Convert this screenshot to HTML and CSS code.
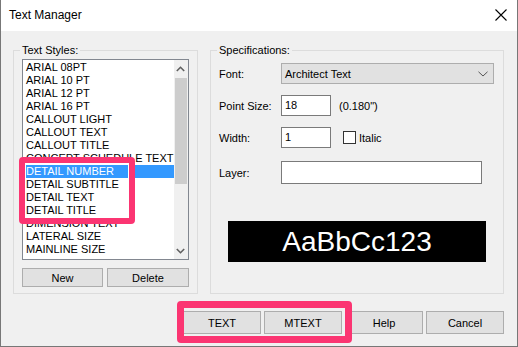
FILE: index.html
```html
<!DOCTYPE html>
<html lang="en">
<head>
    <meta charset="UTF-8">
    <title>Text Manager</title>
    <link rel="stylesheet" href="styles.css">
</head>
<body>
<div class="window">
    <div class="titlebar">
        <span class="title">Text Manager</span>
        <svg class="close" width="12" height="12" viewBox="0 0 12 12">
            <path d="M0.5 0.5L11.5 11.5M11.5 0.5L0.5 11.5" stroke="#000" stroke-width="1.1" fill="none"/>
        </svg>
    </div>
    <div class="body">
        <div class="groups">
            <fieldset class="group styles">
                <legend>Text Styles:</legend>
                <div class="listbox">
                    <ul class="items">
                        <li>ARIAL 08PT</li>
                        <li>ARIAL 10 PT</li>
                        <li>ARIAL 12 PT</li>
                        <li>ARIAL 16 PT</li>
                        <li>CALLOUT LIGHT</li>
                        <li>CALLOUT TEXT</li>
                        <li>CALLOUT TITLE</li>
                        <li>CONCEPT SCHEDULE TEXT</li>
                        <li class="selected">DETAIL NUMBER</li>
                        <li>DETAIL SUBTITLE</li>
                        <li>DETAIL TEXT</li>
                        <li>DETAIL TITLE</li>
                        <li>DIMENSION TEXT</li>
                        <li>LATERAL SIZE</li>
                        <li>MAINLINE SIZE</li>
                    </ul>
                    <div class="scrollbar">
                        <div class="sb-btn">
                            <svg width="9" height="6" viewBox="0 0 9 6"><path d="M0.8 5L4.5 1.3L8.2 5" stroke="#606060" stroke-width="1.6" fill="none"/></svg>
                        </div>
                        <div class="sb-track"><div class="sb-thumb"></div></div>
                        <div class="sb-btn">
                            <svg width="9" height="6" viewBox="0 0 9 6"><path d="M0.8 1L4.5 4.7L8.2 1" stroke="#606060" stroke-width="1.6" fill="none"/></svg>
                        </div>
                    </div>
                </div>
                <div class="list-buttons">
                    <button class="btn">New</button>
                    <button class="btn">Delete</button>
                </div>
            </fieldset>
            <fieldset class="group specs">
                <legend>Specifications:</legend>
                <div class="row row-font">
                    <span class="label">Font:</span>
                    <div class="combo">
                        <span>Architect Text</span>
                        <svg width="10" height="6" viewBox="0 0 10 6"><path d="M0.5 0.8L5 5L9.5 0.8" stroke="#555" stroke-width="1" fill="none"/></svg>
                    </div>
                </div>
                <div class="row row-size">
                    <span class="label">Point Size:</span>
                    <div class="input small">18</div>
                    <span class="note">(0.180")</span>
                </div>
                <div class="row row-width">
                    <span class="label">Width:</span>
                    <div class="input small">1</div>
                    <span class="check"></span>
                    <span class="check-label">Italic</span>
                </div>
                <div class="row row-layer">
                    <span class="label">Layer:</span>
                    <div class="input wide"></div>
                </div>
                <div class="preview">AaBbCc123</div>
            </fieldset>
        </div>
        <div class="actions">
            <button class="btn action">TEXT</button>
            <button class="btn action">MTEXT</button>
            <button class="btn action">Help</button>
            <button class="btn action">Cancel</button>
        </div>
    </div>
    <div class="mark mark-list"></div>
    <div class="mark mark-actions"></div>
</div>
</body>
</html>
```

FILE: styles.css
```css
*{
    margin: 0;
    padding: 0;
    box-sizing: border-box;
}
body{
    width: 518px;
    height: 347px;
    overflow: hidden;
    font-family: "Liberation Sans", Arial, sans-serif;
    font-size: 11px;
    color: #000;
    background: #fff;
}
.window{
    position: relative;
    width: 518px;
    height: 347px;
    border: 1px solid #777;
    border-top: 0;
    background: #f0f0f0;
}
.titlebar{
    height: 31px;
    background: #fff;
    display: flex;
    align-items: center;
    justify-content: space-between;
    padding: 0 10px 1px 8px;
}
.title{
    font-size: 12px;
}
.close{
    display: block;
}
.body{
    padding: 13px 13px 0 12px;
}
.groups{
    display: flex;
    gap: 12px;
}
.group{
    border: 1px solid #dcdcdc;
    padding: 0 8px 6px 8px;
    min-width: 0;
}
.group legend{
    font-size: 11px;
    line-height: 13px;
    padding: 0 2px;
    margin-left: -2px;
}
.styles{
    width: 185px;
}
.specs{
    width: 294px;
}
.listbox{
    display: flex;
    margin-top: 2px;
    height: 201px;
    border: 1px solid #828790;
    background: #fff;
}
.items{
    flex: 1;
    list-style: none;
    padding-top: 1px;
}
.items li{
    height: 13px;
    line-height: 13px;
    margin-left: 1px;
    padding-left: 2px;
    white-space: nowrap;
    overflow: hidden;
}
.items .selected{
    background: #3399ff;
    color: #fff;
}
.scrollbar{
    width: 17px;
    display: flex;
    flex-direction: column;
    background: #f0f0f0;
}
.sb-btn{
    height: 17px;
    display: flex;
    align-items: center;
    justify-content: center;
}
.sb-track{
    flex: 1;
    padding: 1px 1px 0 1px;
}
.sb-thumb{
    height: 106px;
    background: #cdcdcd;
}
.list-buttons{
    display: grid;
    grid-template-columns: 81px 82px;
    gap: 4px;
    margin-top: 8px;
}
.btn{
    font-family: "Liberation Sans", Arial, sans-serif;
    font-size: 11px;
    color: #000;
    height: 19px;
    background: #e1e1e1;
    border: 1px solid #adadad;
}
.row{
    display: flex;
    align-items: center;
}
.label{
    width: 62px;
}
.row-font{
    margin-top: 6px;
}
.row-size{
    margin-top: 11px;
}
.row-width{
    margin-top: 11px;
}
.row-layer{
    margin-top: 13px;
}
.combo{
    width: 213px;
    height: 21px;
    background: #e1e1e1;
    border: 1px solid #adadad;
    display: flex;
    align-items: center;
    justify-content: space-between;
    padding: 0 5px 0 3px;
}
.input{
    height: 21px;
    background: #fff;
    border: 1px solid #7a7a7a;
    padding: 0 3px;
    line-height: 18px;
}
.input.small{
    width: 50px;
}
.input.wide{
    width: 201px;
    height: 23px;
}
.note{
    margin-left: 8px;
}
.check{
    width: 13px;
    height: 13px;
    margin-left: 12px;
    border: 1px solid #333;
    background: #fff;
}
.check-label{
    margin-left: 3px;
}
.preview{
    width: 258px;
    height: 41px;
    margin: 37px auto 0;
    background: #000;
    color: #fff;
    font-size: 28px;
    line-height: 41px;
    text-align: center;
}
.actions{
    display: flex;
    justify-content: flex-end;
    gap: 3px;
    margin-top: 17px;
}
.btn.action{
    width: 78px;
    height: 23px;
}
.mark{
    position: absolute;
    border: 6px solid #fb3572;
    border-radius: 4px;
    box-shadow: inset 0 0 0 1px #fff;
}
.mark-list{
    left: 18px;
    top: 157px;
    width: 116px;
    height: 67px;
}
.mark-actions{
    left: 176px;
    top: 301px;
    width: 175px;
    height: 42px;
    border-width: 7px;
    box-shadow: none;
}
```
